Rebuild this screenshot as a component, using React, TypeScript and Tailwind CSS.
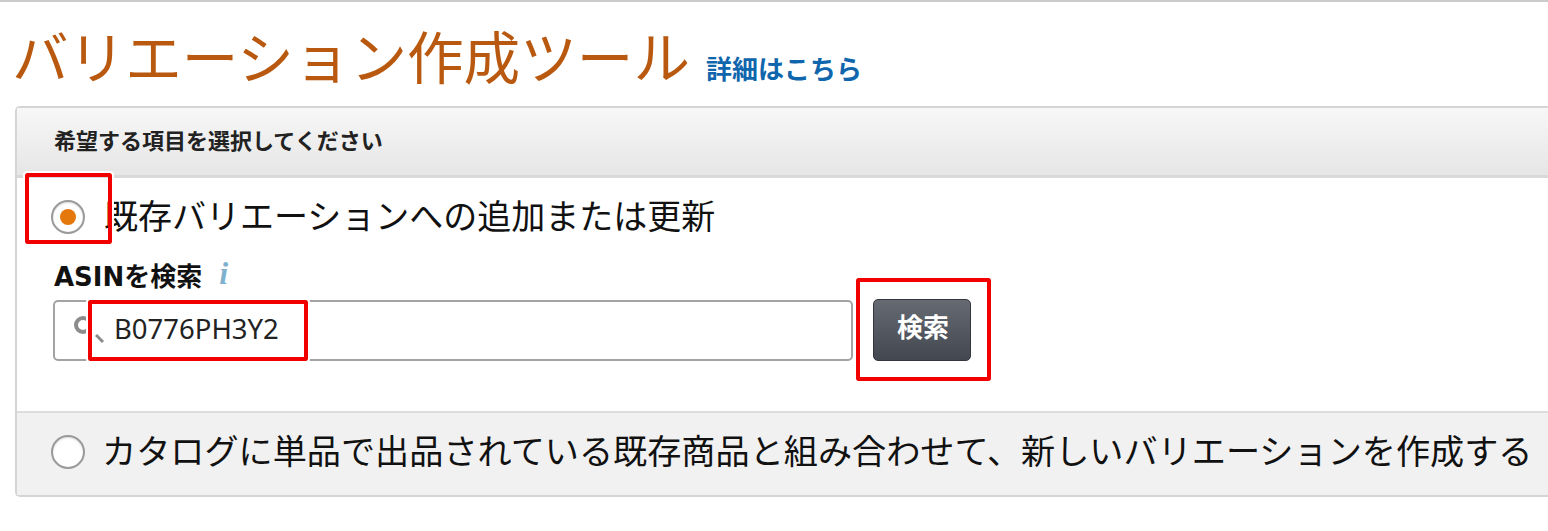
import React from "react";

const font = "font-['Noto_Sans','Noto_Sans_CJK_JP',sans-serif]";

// red annotation frames drawn on top of the screenshot
const RedBox: React.FC<{ className: string; children?: React.ReactNode }> = ({ className, children }) => (
  <div className={`absolute rounded-[2px] border-[4px] border-[#f20000] outline outline-2 outline-white ${className}`}>
    {children}
  </div>
);

const Radio: React.FC<{ checked?: boolean }> = ({ checked }) => (
  <span className="flex h-[34px] w-[34px] shrink-0 items-center justify-center rounded-full border-2 border-[#9a9a9a] bg-white shadow-[inset_0_1px_2px_rgba(0,0,0,0.15)]">
    {checked && <span className="h-[16px] w-[16px] rounded-full bg-[#e4780d]" />}
  </span>
);

export default function App() {
  return (
    <div className={`relative h-[531px] w-[1548px] overflow-hidden bg-white text-[#111] ${font}`}>
      <div className="h-[2px] bg-[#cccccc]" />

      <div className="flex h-[104px] items-baseline pl-[12px] pt-[15px]">
        <h1 className="text-[56.6px] font-normal leading-[80px] text-[#b9590f]">バリエーション作成ツール</h1>
        <a className="ml-[16px] text-[26px] font-bold leading-none text-[#0f66ad]">詳細はこちら</a>
      </div>

      <div className="ml-[15px] h-[391px] rounded-l-[5px] border-y-2 border-l-2 border-[#d5d5d5]">
        <div className="flex h-[67px] items-center bg-gradient-to-b from-[#f7f7f7] to-[#e6e6e6] pb-[2px] pl-[37px] text-[22px] font-bold text-[#222]">
          希望する項目を選択してください
        </div>
        <div className="h-[238px] border-t-[3px] border-b-2 border-t-[#d9d9d9] border-b-[#dddddd] bg-white pl-[34px]">
          <div className="flex h-[73px] items-center gap-[19px] pt-[5px] text-[34px] leading-none">
            <Radio checked />
            <span className="-mt-[2px]">既存バリエーションへの追加または更新</span>
          </div>
          <div className="mt-[8px] flex h-[36px] items-center gap-[17px] pl-[3px] font-['DejaVu_Sans','Noto_Sans_CJK_JP',sans-serif] text-[26px] font-bold leading-none">
            <span>ASINを検索</span>
            <span className="-mt-[8px] font-['Liberation_Serif',serif] text-[32px] font-bold italic text-[#7fb1cf]">i</span>
          </div>
          <div className="mt-[4px] flex items-center gap-[20px] pl-[2px]">
            <div className="flex h-[61px] w-[800px] items-center rounded-[5px] border-2 border-[#a3a3a3] bg-white pl-[18px]">
              <svg width="18" height="22" viewBox="0 0 18 22" fill="none" stroke="#8c8c8c" strokeWidth="4" className="-mt-[8px]">
                <circle cx="10" cy="10" r="7" />
              </svg>
            </div>
            <button className="flex h-[62px] w-[98px] items-center justify-center rounded-[5px] border border-[#33373d] bg-gradient-to-b from-[#666b73] to-[#424750] pb-[6px] pl-[2px] text-[26px] font-bold text-white">
              検索
            </button>
          </div>
        </div>
        <div className="flex h-[82px] items-center gap-[17px] bg-[#f1f1f1] pb-[5px] pl-[34px] text-[34.15px] leading-none">
          <Radio />
          <span className="whitespace-nowrap">カタログに単品で出品されている既存商品と組み合わせて、新しいバリエーションを作成する</span>
        </div>
      </div>

      <RedBox className="left-[25px] top-[173px] h-[71px] w-[87px]" />
      <RedBox className="left-[88px] top-[300px] flex h-[61px] w-[220px] items-center bg-white pb-[3px] pl-[22px] text-[27.5px] leading-none text-[#222]">
        <svg width="10" height="10" viewBox="0 0 10 10" stroke="#8c8c8c" strokeWidth="3" className="absolute left-[3px] top-[30px]">
          <path d="M1 1 L8 8" />
        </svg>
        B0776PH3Y2
      </RedBox>
      <RedBox className="left-[856px] top-[278px] h-[103px] w-[135px]" />
    </div>
  );
}
